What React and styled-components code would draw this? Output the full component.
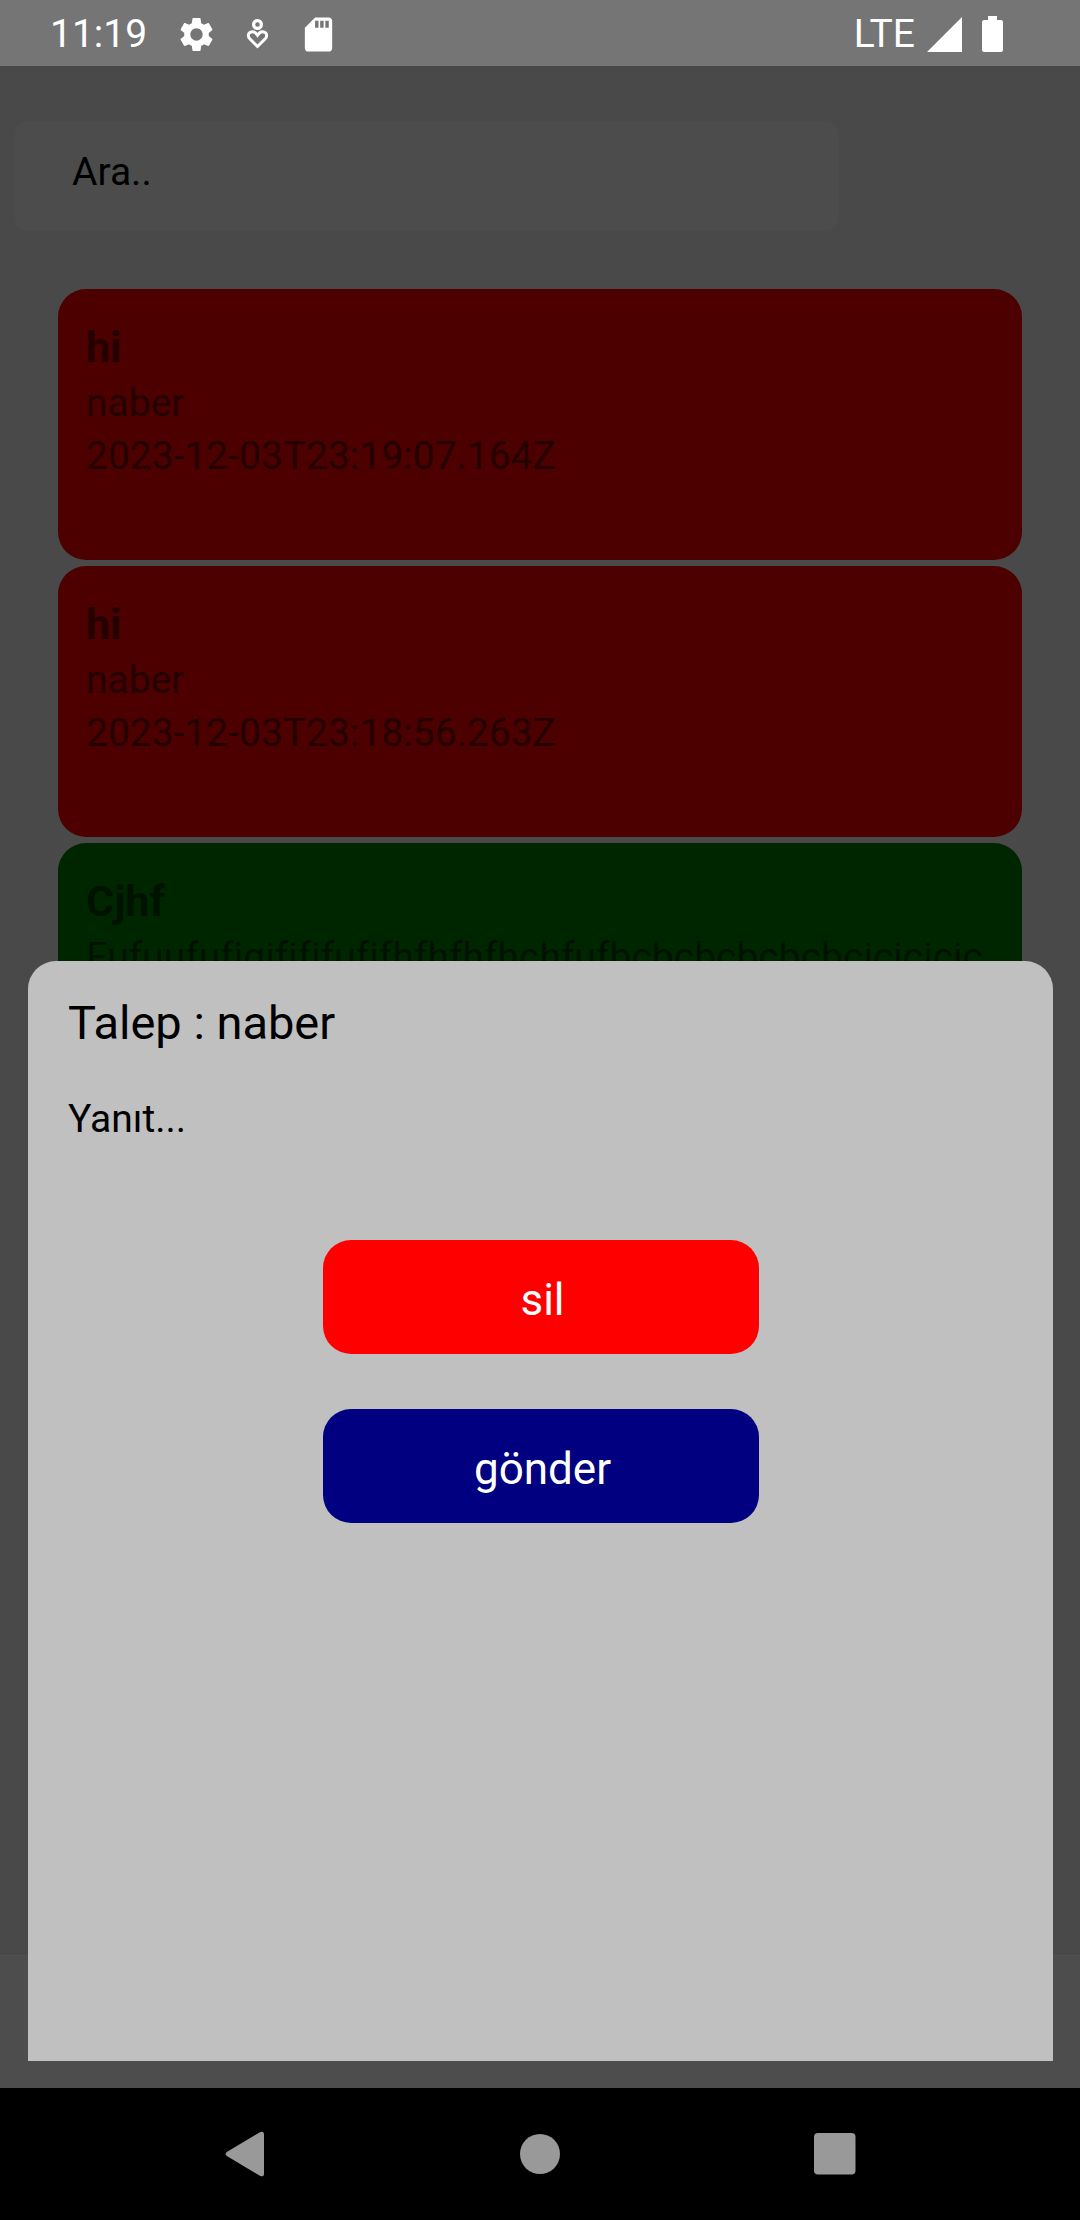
import React from "react";
import styled, { createGlobalStyle } from "styled-components";
import { MdSettings, MdSdCard } from "react-icons/md";

const GlobalStyle = createGlobalStyle`
  * { box-sizing: border-box; }
  body { margin: 0; background: #494949; }
  body, input, button { font-family: Roboto, "Liberation Sans", sans-serif; }
`;

const Screen = styled.div`
  display: flex;
  flex-direction: column;
  height: 100vh;
  overflow: hidden;
`;

const StatusBar = styled.header`
  display: flex;
  flex: none;
  justify-content: space-between;
  align-items: center;
  height: 66px;
  padding: 2px 77px 0 50px;
  background: #757575;
  color: #fff;
  font-size: 39px;
  line-height: 46px;
`;

const StatusGroup = styled.div`
  display: flex;
  align-items: center;
  gap: ${(p) => p.$gap}px;
`;

const Clock = styled.time`
  margin-right: 9px;
`;

const Body = styled.main`
  position: relative;
  display: flex;
  flex: 1;
  flex-direction: column;
  min-height: 0;
`;

const SearchInput = styled.input`
  flex: none;
  width: 825px;
  max-width: calc(100% - 28px);
  height: 110px;
  margin: 55px 14px 58px;
  padding: 0 58px 8px;
  border: 0;
  border-radius: 14px;
  outline: 0;
  background: #4c4c4c;
  color: #000;
  font-size: 39px;
  &::placeholder { color: #000; opacity: 1; }
`;

const RequestList = styled.ul`
  display: flex;
  flex: 1;
  flex-direction: column;
  gap: 6px;
  min-height: 0;
  margin: 0;
  padding: 0 58px;
  overflow: hidden;
  list-style: none;
`;

const RequestCard = styled.li`
  flex: none;
  height: 271px;
  padding: 28px;
  border-radius: 28px;
  background: ${(p) => (p.$answered ? "#002600" : "#4c0000")};
  color: ${(p) => (p.$answered ? "#001300" : "#250000")};
  font-size: 39px;
  font-variant-ligatures: none;
  line-height: 53px;
`;

const CardTitle = styled.h2`
  margin: 0;
  padding: 4px 0 3px;
  font-size: 43px;
  font-weight: 700;
  line-height: 53px;
`;

const CardText = styled.p`
  margin: 0;
  overflow: hidden;
  white-space: nowrap;
`;

const TabBar = styled.div`
  flex: none;
  height: 135px;
  border-top: 1px solid #444;
  background: #4d4d4d;
`;

const Overlay = styled.div`
  position: absolute;
  inset: 0;
  display: flex;
  align-items: flex-end;
  padding: 0 27px 27px 28px;
`;

const Sheet = styled.section`
  display: flex;
  flex: 1;
  flex-direction: column;
  align-items: center;
  height: 1100px;
  padding: 28px 40px;
  border-radius: 28px 28px 0 0;
  background: #c0c0c0;
`;

const SheetTitle = styled.h1`
  align-self: stretch;
  margin: 0;
  padding-top: 4px;
  color: #000;
  font-size: 47px;
  font-weight: 400;
  line-height: 60px;
`;

const ReplyInput = styled.input`
  align-self: stretch;
  height: 132px;
  padding: 0;
  border: 0;
  outline: 0;
  background: transparent;
  color: #000;
  font-size: 39px;
  &::placeholder { color: #000; opacity: 1; }
`;

const ActionButton = styled.button`
  width: 436px;
  height: 114px;
  margin-top: 55px;
  padding: 6px 0 0 4px;
  border: 0;
  border-radius: 28px;
  background: ${(p) => p.$color};
  color: #fff;
  font-size: 44px;
`;

const NavBar = styled.nav`
  display: flex;
  flex: none;
  justify-content: center;
  gap: 163px;
  height: 132px;
  background: #000;
`;

const NavButton = styled.button`
  display: flex;
  align-items: center;
  justify-content: center;
  width: 132px;
  padding: 0;
  border: 0;
  background: transparent;
`;

const DebugIcon = () => (
  <svg width="41" height="41" viewBox="0 0 41 41" fill="none" stroke="#fff" aria-hidden="true">
    <circle cx="20.5" cy="10.5" r="3.9" strokeWidth="3.2" />
    <path d="M20.5 32.5 12.8 24.8C10.7 22.7 11 19.8 12.8 18.6 15.6 16.9 18.4 18 20.5 21.3 22.6 18 25.4 16.9 28.2 18.6 30 19.8 30.3 22.7 28.2 24.8Z" strokeWidth="3" />
  </svg>
);

const SignalIcon = () => (
  <svg width="35" height="35" viewBox="0 0 35 35" fill="#fff" aria-hidden="true">
    <path d="M35 0V35H0Z" />
  </svg>
);

const BatteryIcon = () => (
  <svg width="21" height="36" viewBox="0 0 21 36" fill="#fff" aria-hidden="true">
    <path d="M6 0H15V4H19Q21 4 21 6V34Q21 36 19 36H2Q0 36 0 34V6Q0 4 2 4H6Z" />
  </svg>
);

const BackIcon = () => (
  <svg width="40" height="46" viewBox="0 0 40 46" fill="#999" aria-hidden="true">
    <path d="M1.8 20.9 34.8 1.2Q39 -.4 39 3.6V42.4Q39 46.4 34.8 44.8L1.8 25.1Q-.6 23 1.8 20.9Z" />
  </svg>
);

const HomeIcon = () => (
  <svg width="40" height="40" viewBox="0 0 40 40" fill="#999" aria-hidden="true">
    <circle cx="20" cy="20" r="20" />
  </svg>
);

const RecentIcon = () => (
  <svg width="42" height="42" viewBox="0 0 42 42" fill="#999" aria-hidden="true">
    <rect width="41.5" height="41.5" rx="4" />
  </svg>
);

const requests = [
  { title: "hi", text: "naber", date: "2023-12-03T23:19:07.164Z", answered: false },
  { title: "hi", text: "naber", date: "2023-12-03T23:18:56.263Z", answered: false },
  { title: "Cjhf", text: "Fufuufufigifififufifhfhfhfhchfufbcbcbcbcbcbcicicicic", answered: true },
];

export default function App() {
  return (
    <Screen>
      <GlobalStyle />
      <StatusBar>
        <StatusGroup $gap={20}>
          <Clock>11:19</Clock>
          <MdSettings size={41} />
          <DebugIcon />
          <MdSdCard size={41} />
        </StatusGroup>
        <StatusGroup $gap={12}>
          <span>LTE</span>
          <StatusGroup $gap={20}>
            <SignalIcon />
            <BatteryIcon />
          </StatusGroup>
        </StatusGroup>
      </StatusBar>
      <Body>
        <SearchInput type="text" placeholder="Ara.." aria-label="Ara" />
        <RequestList>
          {requests.map((r, i) => (
            <RequestCard key={i} $answered={r.answered}>
              <CardTitle>{r.title}</CardTitle>
              <CardText>{r.text}</CardText>
              {r.date && <CardText>{r.date}</CardText>}
            </RequestCard>
          ))}
        </RequestList>
        <TabBar />
        <Overlay>
          <Sheet role="dialog" aria-labelledby="sheet-title">
            <SheetTitle id="sheet-title">Talep : naber</SheetTitle>
            <ReplyInput type="text" placeholder="Yanıt..." aria-label="Yanıt" />
            <ActionButton type="button" $color="#ff0000">sil</ActionButton>
            <ActionButton type="button" $color="#000080">gönder</ActionButton>
          </Sheet>
        </Overlay>
      </Body>
      <NavBar>
        <NavButton type="button" aria-label="Geri"><BackIcon /></NavButton>
        <NavButton type="button" aria-label="Ana ekran"><HomeIcon /></NavButton>
        <NavButton type="button" aria-label="Son uygulamalar"><RecentIcon /></NavButton>
      </NavBar>
    </Screen>
  );
}
